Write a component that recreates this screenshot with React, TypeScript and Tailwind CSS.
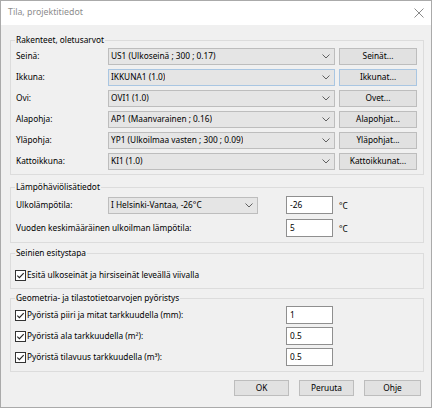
import React from "react"

const font = { fontFamily: '"Segoe UI", "Noto Sans", sans-serif' }

function Chevron() {
  return (
    <svg width="8" height="5" viewBox="0 0 8 5" className="mr-[4px] shrink-0">
      <path d="M0.5 0.5 L4 4 L7.5 0.5" fill="none" stroke="#606060" strokeWidth="1" />
    </svg>
  )
}

function Combo({ text, w, blue }: { text: string; w: string; blue?: boolean }) {
  return (
    <div className={`${w} h-full flex items-center justify-between bg-[#e5e5e5] border ${blue ? "border-[#a9c6e2]" : "border-[#bdbdbd]"} pl-[2px]`}>
      <span className="truncate">{text}</span>
      <Chevron />
    </div>
  )
}

function Btn({ text, w, blue }: { text: string; w: string; blue?: boolean }) {
  return (
    <div className={`${w} h-full flex items-center justify-center bg-[#e1e1e1] border ${blue ? "border-[#a9c6e2]" : "border-[#bdbdbd]"}`}>
      {text}
    </div>
  )
}

function Input({ value }: { value: string }) {
  return (
    <div className="w-[47px] h-[18px] bg-white border border-[#8f8f8f] flex items-center pl-[3px]">{value}</div>
  )
}

function Check() {
  return (
    <svg width="11" height="11" viewBox="0 0 11 11" className="shrink-0">
      <rect x="0.5" y="0.5" width="10" height="10" fill="#fff" stroke="#333" />
      <path d="M2.3 5.6 L4.4 7.7 L8.7 3.2" fill="none" stroke="#222" strokeWidth="1.1" />
    </svg>
  )
}

function Group({ title, children, className }: { title: string; children: React.ReactNode; className?: string }) {
  return (
    <fieldset className={`border border-[#dcdcdc] pl-[5px] pr-[5px] ${className ?? ""}`}>
      <legend className="-ml-[1px] px-[1px] leading-[12px]">{title}</legend>
      {children}
    </fieldset>
  )
}

const rakenteet = [
  { label: "Seinä:", value: "US1 (Ulkoseinä ; 300 ; 0.17)", btn: "Seinät..." },
  { label: "Ikkuna:", value: "IKKUNA1 (1.0)", btn: "Ikkunat...", blue: true },
  { label: "Ovi:", value: "OVI1 (1.0)", btn: "Ovet..." },
  { label: "Alapohja:", value: "AP1 (Maanvarainen ; 0.16)", btn: "Alapohjat..." },
  { label: "Yläpohja:", value: "YP1 (Ulkoilmaa vasten ; 300 ; 0.09)", btn: "Yläpohjat..." },
  { label: "Kattoikkuna:", value: "KI1 (1.0)", btn: "Kattoikkunat..." },
]

const rounding = [
  { label: "Pyöristä piiri ja mitat tarkkuudella (mm):", value: "1" },
  { label: "Pyöristä ala tarkkuudella (m²):", value: "0.5" },
  { label: "Pyöristä tilavuus tarkkuudella (m³):", value: "0.5" },
]

export default function App() {
  return (
    <div className="w-[432px] h-[408px] border border-[#aaaaaa] bg-[#f0f0f0] flex flex-col text-[8.3px] text-black overflow-hidden" style={font}>
      <div className="h-[24px] bg-white flex items-center justify-between pl-[7px] pr-[7px] shrink-0">
        <span className="text-[8.8px] text-[#8c8c8c]">Tila, projektitiedot</span>
        <svg width="10" height="10" viewBox="0 0 10 10">
          <path d="M0.5 0.5 L9.5 9.5 M9.5 0.5 L0.5 9.5" stroke="#8a8a8a" strokeWidth="1" />
        </svg>
      </div>

      <div className="flex flex-col pl-[9px] pr-[7px] pt-[9px]">
        <Group title="Rakenteet, oletusarvot" className="pt-[2px] pb-[4px]">
          <div className="flex flex-col gap-[4px]">
            {rakenteet.map((r) => (
              <div key={r.label} className="flex items-center h-[17px]">
                <span className="w-[92px] shrink-0">{r.label}</span>
                <Combo text={r.value} w="w-[227px]" blue={r.blue} />
                <div className="ml-[4px] h-full">
                  <Btn text={r.btn} w="w-[78px]" blue={r.blue} />
                </div>
              </div>
            ))}
          </div>
        </Group>

        <Group title="Lämpöhäviölisätiedot" className="mt-[6px] pt-[3px] pb-[5px]">
          <div className="flex flex-col gap-[5px]">
            <div className="flex items-center h-[18px]">
              <span className="w-[92px] shrink-0">Ulkolämpötila:</span>
              <div className="h-[17px]">
                <Combo text="I Helsinki-Vantaa, -26°C" w="w-[150px]" />
              </div>
              <div className="ml-[28px]">
                <Input value="-26" />
              </div>
              <span className="ml-[6px] mt-[3px]">°C</span>
            </div>
            <div className="flex items-center h-[18px]">
              <span className="w-[270px] shrink-0">Vuoden keskimääräinen ulkoilman lämpötila:</span>
              <Input value="5" />
              <span className="ml-[6px] mt-[3px]">°C</span>
            </div>
          </div>
        </Group>

        <Group title="Seinien esitystapa" className="mt-[4px] pt-[7px] pb-[4px]">
          <div className="flex items-center h-[18px] -ml-[1px] gap-[1px]">
            <Check />
            <span>Esitä ulkoseinät ja hirsiseinät leveällä viivalla</span>
          </div>
        </Group>

        <Group title="Geometria- ja tilastotietoarvojen pyöristys" className="mt-[3px] pt-[2px] pb-[5px]">
          <div className="flex flex-col gap-[3px]">
            {rounding.map((r) => (
              <div key={r.label} className="flex items-center h-[18px]">
                <div className="w-[270px] shrink-0 flex items-center -ml-[1px] gap-[1px]">
                  <Check />
                  <span>{r.label}</span>
                </div>
                <div className="ml-[1px]">
                  <Input value={r.value} />
                </div>
              </div>
            ))}
          </div>
        </Group>

        <div className="flex justify-end gap-[10px] mt-[8px] h-[16px] pr-[3px]">
          <Btn text="OK" w="w-[55px]" />
          <Btn text="Peruuta" w="w-[55px]" />
          <Btn text="Ohje" w="w-[57px]" />
        </div>
      </div>
    </div>
  )
}
